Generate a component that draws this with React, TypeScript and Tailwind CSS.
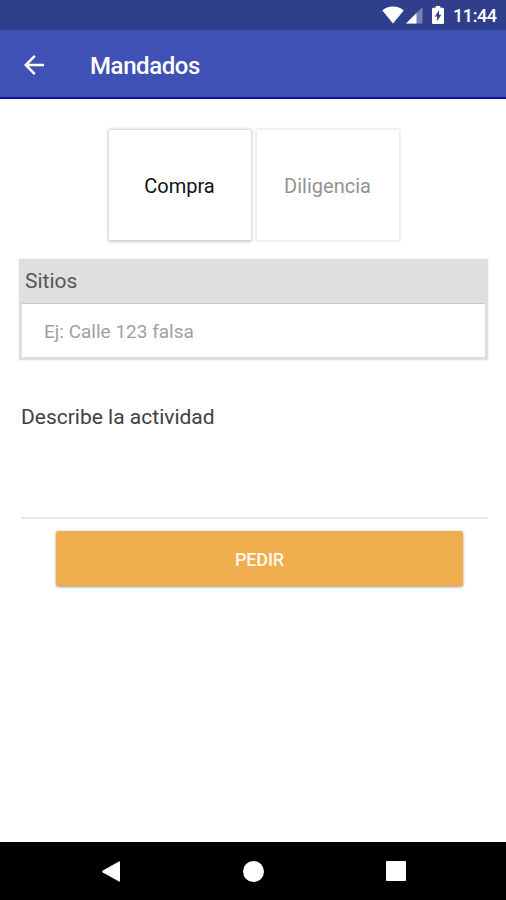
import React from 'react';

function StatusBar() {
  return (
    <div className="h-[30px] bg-[#303f8c] flex items-center justify-end pr-[9px] text-white">
      <svg className="w-[22px] h-[18px]" viewBox="0 0 22 18" fill="currentColor">
        <path d="M0.3 4.5C3 2 6.8 0.6 11 0.6S19 2 21.7 4.5L11 17.6Z" />
      </svg>
      <svg className="w-[17px] h-[17px] ml-[2px]" viewBox="0 0 17 17" fill="currentColor">
        <path d="M16.5 0V16.5H0Z" opacity="0.35" />
        <path d="M10.5 6V16.5H0Z" />
      </svg>
      <svg className="w-[12px] h-[18px] ml-[9px]" viewBox="0 0 12 18">
        <path d="M3.7 0H8.3V1.8H10.8Q12 1.8 12 3V16.8Q12 18 10.8 18H1.2Q0 18 0 16.8V3Q0 1.8 1.2 1.8H3.7Z" fill="#fff" />
        <path d="M7 4.2L2.8 10.6H5.2V15.2L9.2 8.8H7Z" fill="#303f8c" />
      </svg>
      <span className="ml-[9px] w-[44px] text-[18px] leading-[30px] font-medium tracking-[-0.4px] whitespace-nowrap pt-[2px]">11:44</span>
    </div>
  );
}

function Header() {
  return (
    <header className="h-[69px] bg-[#3f51b5] border-b-2 border-[#0c10a2] flex items-center text-white">
      <svg className="w-[20px] h-[20px] ml-[24px] mt-[2px]" viewBox="0 0 20 20" fill="none" stroke="currentColor" strokeWidth="2.5">
        <path d="M20 10H2.2M10.8 0.9L1.8 10L10.8 19.1" />
      </svg>
      <h1 className="ml-[46px] mt-[4px] text-[24px] font-medium tracking-[-0.4px]">Mandados</h1>
    </header>
  );
}

export default function App() {
  const options = [
    { name: 'Compra', style: 'text-[#111111] shadow-[0_0.5px_3px_1px_rgba(0,0,0,0.2)]' },
    { name: 'Diligencia', style: 'text-[#929292] shadow-[0_0_2px_1.5px_rgba(0,0,0,0.07)]' },
  ];

  return (
    <div className="w-full h-screen flex flex-col bg-white font-[Roboto,sans-serif] overflow-hidden">
      <StatusBar />
      <Header />

      <main className="flex-1 flex flex-col">
        <div className="flex gap-[6px] ml-[109px] mt-[31px]">
          {options.map((option) => (
            <button
              key={option.name}
              className={`w-[142px] h-[110px] pt-[2px] pr-[1px] rounded-[1px] bg-white text-[20px] ${option.style}`}
            >
              {option.name}
            </button>
          ))}
        </div>

        <section className="mt-[19px] mx-[19px] w-[469px] h-[101px] bg-[#dfdfdf] px-[3px] pb-[3px] shadow-[0_0_2px_rgba(0,0,0,0.12)]">
          <h2 className="h-[44px] pl-[3px] pt-[1px] text-[21px] leading-[42px] text-[#575757]">Sitios</h2>
          <div className="h-[54px] bg-white border-t border-[#c8c8c8] pl-[22px] text-[19px] leading-[56px] text-[#a0a0a0]">
            Ej: Calle 123 falsa
          </div>
        </section>

        <div className="mt-[36px] ml-[21px] w-[467px] h-[123px] border-b-2 border-[#e6e6e6] text-[21px] leading-[42px] text-[#404040]">
          Describe la actividad
        </div>

        <button className="mt-[12px] ml-[56px] w-[407px] h-[55px] pt-[1px] rounded-[2px] bg-[#f0ad4e] text-[#fff8ec] text-[18px] font-medium tracking-[-0.2px] shadow-[0_1px_3px_rgba(0,0,0,0.4)]">
          PEDIR
        </button>
      </main>

      <nav className="h-[58px] bg-black flex items-center text-white">
        <svg className="w-[18px] h-[21px] ml-[102px]" viewBox="0 0 18 21" fill="currentColor">
          <path d="M17 0.5Q18 0 18 1.2V19.8Q18 21 17 20.5L0.8 11.4Q-0.3 10.5 0.8 9.6Z" />
        </svg>
        <div className="w-[21px] h-[21px] rounded-full bg-white ml-[123px]" />
        <div className="w-[20px] h-[20px] rounded-[1px] bg-white ml-[122px]" />
      </nav>
    </div>
  );
}
